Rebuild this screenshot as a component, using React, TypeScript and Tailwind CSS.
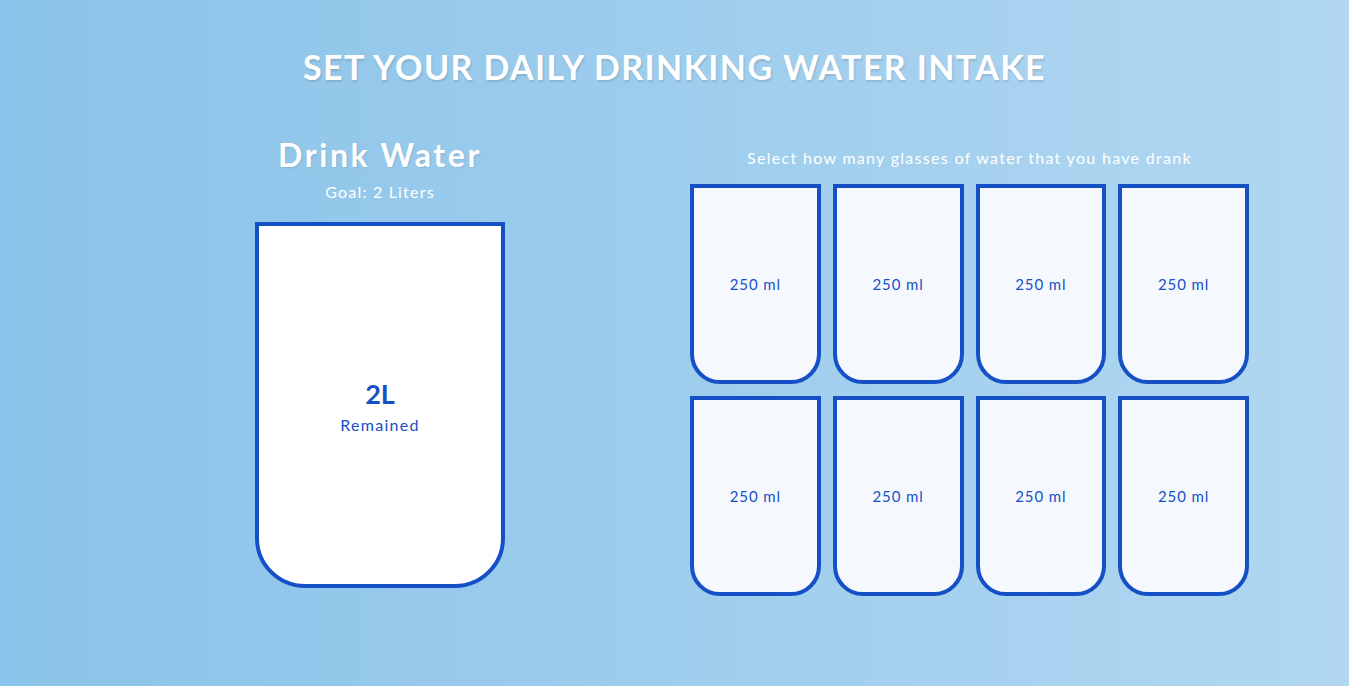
import React from 'react';

const cups = Array.from({ length: 8 }, (_, i) => i);

export default function App() {
  return (
    <div
      className="w-[1349px] h-[686px] overflow-hidden bg-gradient-to-r from-[#8ac3e9] to-[#b1d7f1] text-white"
      style={{ fontFamily: 'Lato, "Noto Sans", sans-serif' }}
    >
      <h1 className="pt-[47px] text-center text-[34px] leading-[40px] font-bold tracking-[1.4px] [text-shadow:1px_2px_2px_rgba(0,0,0,0.12)]">
        SET YOUR DAILY DRINKING WATER INTAKE
      </h1>

      <div className="flex mt-[57px] ml-[255px] gap-[185px]">
        <div className="w-[250px] flex flex-col items-center">
          <h2 className="text-[32px] leading-[40px] font-bold tracking-[2.6px] mt-[-9px] [text-shadow:1px_1px_2px_rgba(0,0,0,0.1)]">
            Drink Water
          </h2>
          <p className="text-[16px] leading-[20px] mt-[7px] tracking-[1.2px]">Goal: 2 Liters</p>
          <div className="mt-[20px] w-[250px] h-[366px] bg-white border-[4px] border-[#1550c7] rounded-b-[50px] flex flex-col items-center justify-center text-[#1550c7]">
            <span className="text-[27px] leading-[30px] font-bold mt-[4px]">2L</span>
            <span className="text-[16px] leading-[22px] tracking-[1.3px] mt-[5px]">Remained</span>
          </div>
        </div>

        <div className="w-[559px] flex flex-col items-center">
          <p className="text-[16px] leading-[20px] tracking-[1.3px] mt-[4px]">
            Select how many glasses of water that you have drank
          </p>
          <div className="mt-[16px] grid grid-cols-4 gap-x-[12px] gap-y-[12px] w-[559px]">
            {cups.map((i) => (
              <div
                key={i}
                className="h-[200px] bg-[#f5f9fd] border-[4px] border-[#1550c7] rounded-b-[30px] flex items-center justify-center text-[#1550c7] text-[15px] tracking-[0.9px]"
              >
                250 ml
              </div>
            ))}
          </div>
        </div>
      </div>
    </div>
  );
}
